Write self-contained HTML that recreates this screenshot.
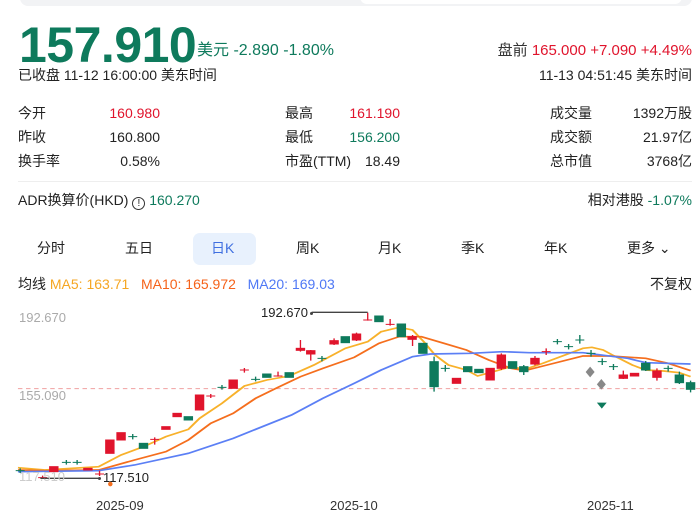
<!DOCTYPE html><html><head><meta charset="utf-8"><style>
body{margin:0;width:700px;height:522px;background:#fff;position:relative;overflow:hidden;font-family:"Liberation Sans","Noto Sans CJK SC",sans-serif;color:#222}
.a{position:absolute;white-space:nowrap;line-height:1}
.g{color:#0e7a5c}.r{color:#e0142c}
.s{font-size:14px}
.c{font-size:13px}
</style></head><body>
<div class="a" style="left:20px;top:-10px;width:672px;height:16px;background:#f2f3f5;border-radius:8px"></div>
<div class="a" style="left:360px;top:-10px;width:322px;height:14px;background:#fff;border-radius:7px"></div>
<div class="a g" style="left:19px;top:20px;font-size:50px;font-weight:bold;letter-spacing:-0.5px">157.910</div>
<div class="a g" style="left:197px;top:43px;font-size:16px">美元 -2.890 -1.80%</div>
<div class="a" style="right:8px;top:43px;font-size:15px"><span style="color:#333">盘前</span> <span class="r">165.000 +7.090 +4.49%</span></div>
<div class="a s" style="left:18px;top:68px">已收盘 11-12 16:00:00 美东时间</div>
<div class="a s" style="right:8px;top:68px">11-13 04:51:45 美东时间</div>

<div class="a s" style="left:18px;top:106px">今开</div><div class="a s r" style="left:100px;width:60px;top:106px;text-align:right">160.980</div>
<div class="a s" style="left:18px;top:130px">昨收</div><div class="a s" style="left:100px;width:60px;top:130px;text-align:right">160.800</div>
<div class="a s" style="left:18px;top:154px">换手率</div><div class="a s" style="left:100px;width:60px;top:154px;text-align:right">0.58%</div>
<div class="a s" style="left:285px;top:106px">最高</div><div class="a s r" style="left:330px;width:70px;top:106px;text-align:right">161.190</div>
<div class="a s" style="left:285px;top:130px">最低</div><div class="a s g" style="left:330px;width:70px;top:130px;text-align:right">156.200</div>
<div class="a s" style="left:285px;top:154px">市盈(TTM)</div><div class="a s" style="left:330px;width:70px;top:154px;text-align:right">18.49</div>
<div class="a s" style="left:550px;top:106px">成交量</div><div class="a s" style="left:600px;width:92px;top:106px;text-align:right">1392万股</div>
<div class="a s" style="left:550px;top:130px">成交额</div><div class="a s" style="left:600px;width:92px;top:130px;text-align:right">21.97亿</div>
<div class="a s" style="left:550px;top:154px">总市值</div><div class="a s" style="left:600px;width:92px;top:154px;text-align:right">3768亿</div>
<div class="a" style="left:18px;top:181px;width:674px;height:1px;background:#eee"></div>
<div class="a s" style="left:18px;top:193px">ADR换算价(HKD) <span style="display:inline-block;width:11px;height:11px;border:1px solid #333;border-radius:50%;font-size:10px;text-align:center;line-height:11px;vertical-align:-1px">!</span> <span class="g">160.270</span></div>
<div class="a s" style="right:8px;top:193px">相对港股 <span class="g">-1.07%</span></div>

<div class="a" style="left:193px;top:233px;width:63px;height:32px;background:#e8f1fd;border-radius:7px"></div>
<div class="a s" style="left:37px;top:241px">分时</div>
<div class="a s" style="left:125px;top:241px">五日</div>
<div class="a s" style="left:211px;top:241px;color:#3f6fe0">日K</div>
<div class="a s" style="left:296px;top:241px">周K</div>
<div class="a s" style="left:378px;top:241px">月K</div>
<div class="a s" style="left:461px;top:241px">季K</div>
<div class="a s" style="left:544px;top:241px">年K</div>
<div class="a s" style="left:627px;top:241px">更多 ⌄</div>
<div class="a s" style="left:18px;top:277px">均线 <span style="color:#f5a623">MA5: 163.71</span>&nbsp;&nbsp; <span style="color:#f5621a">MA10: 165.972</span>&nbsp;&nbsp; <span style="color:#4f78f5">MA20: 169.03</span></div>
<div class="a s" style="right:8px;top:277px">不复权</div>

<svg class="a" style="left:0;top:300px" width="700" height="222" viewBox="0 0 1561 666" preserveAspectRatio="none">
<line x1="40" y1="266" x2="1561" y2="266" stroke="#f0a0a0" stroke-width="3" stroke-dasharray="10,8"/>
<polyline points="40,503 100,510 220,500 270,465 320,440 370,410 420,388 445,355 495,310 545,258 595,240 645,228 700,195 770,145 820,125 850,95 890,82 920,90 945,125 970,165 1000,195 1040,210 1065,228 1100,215 1140,200 1170,208 1210,190 1260,165 1300,145 1320,142 1345,150 1370,168 1410,195 1440,210 1480,213 1515,218 1540,230" fill="none" stroke="#f8b12a" stroke-width="5"/>
<polyline points="40,510 100,512 220,510 300,480 370,455 420,420 470,370 520,340 570,295 620,262 670,230 720,205 790,172 845,130 890,110 940,110 990,130 1040,150 1090,180 1140,205 1170,212 1220,195 1300,168 1360,168 1440,175 1490,190 1540,212" fill="none" stroke="#f56e1d" stroke-width="5"/>
<polyline points="40,515 220,512 300,495 420,460 520,415 650,345 720,295 790,250 850,210 920,170 960,162 1050,160 1120,155 1180,158 1300,158 1400,175 1440,188 1540,192" fill="none" stroke="#5b7ff5" stroke-width="5"/>
<g stroke-width="3">
<g fill="#0e7a5c" stroke="#0e7a5c">
<path d="M35 512h20M45 505v14M138 487h20M148 480v14M162 487h20M172 480v14M286 410h20M296 402v16M485 262h20M495 255v14M560 238h20M570 230v14M708 175h20M718 168v16M983 205h20M993 195v20M1233 125h20M1243 117v16M1258 140h20M1268 132v16M1283 120h20M1293 105v26M1308 160h20M1318 150v20M1333 185h20M1343 175v20M1358 200h20M1368 192v18M1480 205h20M1490 197v18"/>
<rect x="311" y="430" width="18" height="15"/><rect x="411" y="350" width="18" height="10"/>
<rect x="586" y="222" width="18" height="10"/><rect x="636" y="218" width="18" height="14"/>
<rect x="761" y="110" width="18" height="18"/><rect x="836" y="48" width="18" height="17"/>
<rect x="886" y="72" width="18" height="38"/><rect x="934" y="130" width="18" height="30"/>
<rect x="959" y="185" width="18" height="75"/><rect x="1034" y="200" width="18" height="15"/>
<rect x="1059" y="208" width="18" height="10"/><rect x="1134" y="185" width="18" height="20"/>
<rect x="1159" y="200" width="18" height="15"/><rect x="1431" y="190" width="18" height="20"/>
<rect x="1506" y="225" width="18" height="23"/><rect x="1531" y="248" width="18" height="20"/>
<path d="M968 170v105M1168 195v30M1440 183v30M1540 242v35M1515 215v37"/>
</g>
<g fill="#e0142c" stroke="#e0142c">
<path d="M85 533h20M95 527v10M212 522h20M222 512v16M335 418h20M345 412v22M460 288h20M470 282v12M535 210h20M545 204v14M610 228h20M620 215v15M810 60h20M820 38v24M860 73h20M870 57v20M1208 155h20M1218 145v20"/>
<rect x="111" y="500" width="18" height="15"/><rect x="187" y="505" width="18" height="5"/>
<rect x="236" y="420" width="18" height="40"/><rect x="261" y="398" width="18" height="22"/>
<rect x="361" y="380" width="18" height="8"/><rect x="386" y="340" width="18" height="10"/>
<rect x="436" y="285" width="18" height="45"/><rect x="511" y="240" width="18" height="25"/>
<rect x="661" y="145" width="18" height="6"/><rect x="684" y="152" width="18" height="10"/>
<rect x="736" y="122" width="18" height="10"/><rect x="786" y="102" width="18" height="18"/>
<rect x="910" y="110" width="18" height="8"/><rect x="1009" y="235" width="18" height="15"/>
<rect x="1084" y="205" width="18" height="35"/><rect x="1109" y="165" width="18" height="40"/>
<rect x="1184" y="175" width="18" height="17"/><rect x="1381" y="225" width="18" height="10"/>
<rect x="1406" y="220" width="18" height="8"/><rect x="1456" y="213" width="18" height="19"/>
<path d="M670 120v35M693 150v32M745 115v20M795 98v25M920 105v33M1118 160v50M1193 168v28M1390 212v25M1465 205v37"/>
</g>
</g>
<path d="M1316 200l10 16-10 16-10-16z" fill="#888"/><path d="M1341 237l10 16-10 16-10-16z" fill="#888"/>
<path d="M1331 308h22l-11 18z" fill="#0e7a5c"/>
<ellipse cx="246" cy="552" rx="5" ry="7" fill="#f56e1d"/>
<path d="M695 37h125M90 535h132" stroke="#444" stroke-width="4" fill="none"/>
</svg>
<div class="a c" style="left:19px;top:311px;color:#aaa">192.670</div>
<div class="a c" style="left:19px;top:389px;color:#aaa">155.090</div>
<div class="a c" style="left:19px;top:470px;color:#ccc">117.510</div>
<div class="a c" style="left:261px;top:306px">192.670</div>
<div class="a c" style="left:103px;top:471px">117.510</div>
<div class="a" style="left:310px;top:312px;width:3px;height:3px;border-radius:50%;background:#444"></div>
<div class="a" style="left:98px;top:477px;width:3px;height:3px;border-radius:50%;background:#444"></div>
<div class="a c" style="left:96px;top:499px;color:#333">2025-09</div>
<div class="a c" style="left:330px;top:499px;color:#333">2025-10</div>
<div class="a c" style="left:587px;top:499px;color:#333">2025-11</div>
</body></html>
